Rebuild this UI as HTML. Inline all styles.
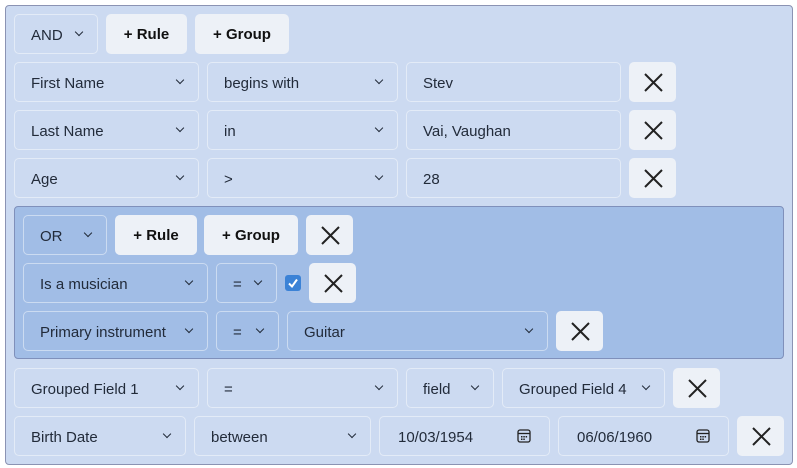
<!DOCTYPE html><html><head><style>
body{margin:0;width:797px;height:468px;background:#fff;font-family:"Liberation Sans",sans-serif;font-size:15px;color:#222b3a;position:relative;overflow:hidden}
.box{position:absolute;box-sizing:border-box;border-radius:4px}
.s{position:absolute;box-sizing:border-box;height:40px;border:1px solid rgba(255,255,255,.45);border-radius:5px;padding-left:16px;padding-top:2px;line-height:38px;white-space:nowrap}
.s.c::after{content:"";position:absolute;right:15px;top:14px;width:5px;height:5px;border-right:1.5px solid #222b3a;border-bottom:1.5px solid #222b3a;transform:rotate(45deg)}
.b{position:absolute;box-sizing:border-box;height:40px;background:#edf1f7;border-radius:5px;font-weight:bold;text-align:center;line-height:42px;color:#111}
.x{width:47px}
.x svg{position:absolute;left:14px;top:10px}
.cal{position:absolute;right:18px;top:12px}
</style></head><body>
<div class="box" style="left:5px;top:5px;width:788px;height:460px;background:#ccdaf1;border:1px solid #8b93b3"></div>
<div class="box" style="left:14px;top:206px;width:770px;height:153px;background:#a1bde6;border:1px solid #7f90bb"></div>
<svg width="0" height="0" style="position:absolute"><defs><g id="xx"><path d="M2 2L19 19M19 2L2 19" stroke="#222" stroke-width="2" fill="none"/></g><g id="cc"><rect x="1" y="1" width="12" height="12" rx="2" stroke="#222" stroke-width="1.3" fill="none"/><path d="M1 4.5H13" stroke="#222" stroke-width="1.3"/><rect x="4" y="7" width="1.5" height="1.5" fill="#222"/><rect x="6.3" y="7" width="1.5" height="1.5" fill="#222"/><rect x="8.6" y="7" width="1.5" height="1.5" fill="#222"/><rect x="4" y="9.5" width="1.5" height="1.5" fill="#222"/><rect x="6.3" y="9.5" width="1.5" height="1.5" fill="#222"/></g></defs></svg>

<div class="s c" style="left:14px;top:14px;width:84px">AND</div>
<div class="b" style="left:106px;top:14px;width:81px">+ Rule</div>
<div class="b" style="left:195px;top:14px;width:94px">+ Group</div>

<div class="s c" style="left:14px;top:62px;width:185px">First Name</div>
<div class="s c" style="left:207px;top:62px;width:191px">begins with</div>
<div class="s" style="left:406px;top:62px;width:215px">Stev</div>
<div class="b x" style="left:629px;top:62px"><svg width="21" height="21"><use href="#xx"/></svg></div>

<div class="s c" style="left:14px;top:110px;width:185px">Last Name</div>
<div class="s c" style="left:207px;top:110px;width:191px">in</div>
<div class="s" style="left:406px;top:110px;width:215px">Vai, Vaughan</div>
<div class="b x" style="left:629px;top:110px"><svg width="21" height="21"><use href="#xx"/></svg></div>

<div class="s c" style="left:14px;top:158px;width:185px">Age</div>
<div class="s c" style="left:207px;top:158px;width:191px">&gt;</div>
<div class="s" style="left:406px;top:158px;width:215px">28</div>
<div class="b x" style="left:629px;top:158px"><svg width="21" height="21"><use href="#xx"/></svg></div>

<div class="s c" style="left:23px;top:215px;width:84px">OR</div>
<div class="b" style="left:115px;top:215px;width:82px">+ Rule</div>
<div class="b" style="left:204px;top:215px;width:94px">+ Group</div>
<div class="b x" style="left:306px;top:215px"><svg width="21" height="21"><use href="#xx"/></svg></div>

<div class="s c" style="left:23px;top:263px;width:185px">Is a musician</div>
<div class="s c" style="left:216px;top:263px;width:61px">=</div>
<div style="position:absolute;left:285px;top:275px;width:16px;height:16px;background:#3b82d6;border-radius:3px"><svg width="16" height="16"><path d="M4 8.5L7 11.5L12 4.5" stroke="#fff" stroke-width="2" fill="none"/></svg></div>
<div class="b x" style="left:309px;top:263px"><svg width="21" height="21"><use href="#xx"/></svg></div>

<div class="s c" style="left:23px;top:311px;width:185px">Primary instrument</div>
<div class="s c" style="left:216px;top:311px;width:63px">=</div>
<div class="s c" style="left:287px;top:311px;width:261px">Guitar</div>
<div class="b x" style="left:556px;top:311px"><svg width="21" height="21"><use href="#xx"/></svg></div>

<div class="s c" style="left:14px;top:368px;width:185px">Grouped Field 1</div>
<div class="s c" style="left:207px;top:368px;width:191px">=</div>
<div class="s c" style="left:406px;top:368px;width:88px">field</div>
<div class="s c" style="left:502px;top:368px;width:163px">Grouped Field 4</div>
<div class="b x" style="left:673px;top:368px"><svg width="21" height="21"><use href="#xx"/></svg></div>

<div class="s c" style="left:14px;top:416px;width:172px">Birth Date</div>
<div class="s c" style="left:194px;top:416px;width:177px">between</div>
<div class="s" style="left:379px;top:416px;width:171px;padding-left:18px">10/03/1954<svg class="cal" width="14" height="14"><use href="#cc"/></svg></div>
<div class="s" style="left:558px;top:416px;width:171px;padding-left:18px">06/06/1960<svg class="cal" width="14" height="14"><use href="#cc"/></svg></div>
<div class="b x" style="left:737px;top:416px"><svg width="21" height="21"><use href="#xx"/></svg></div>
</body></html>
